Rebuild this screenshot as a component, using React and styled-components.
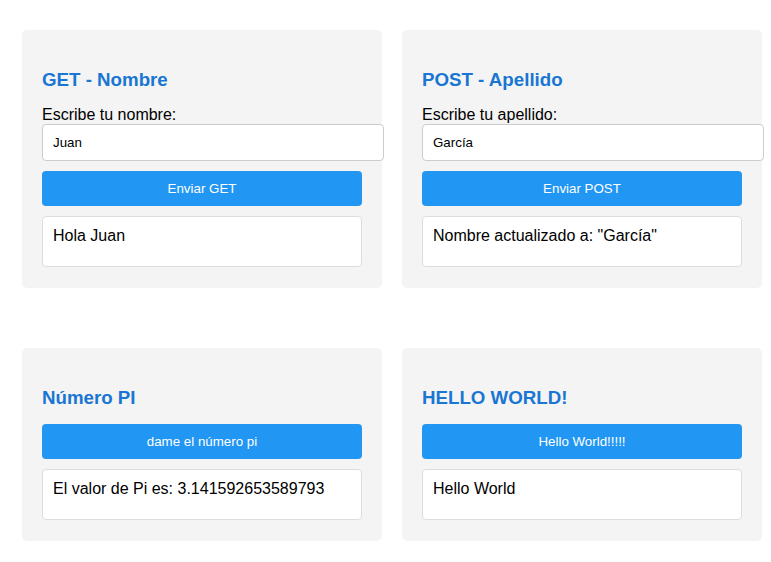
import React from 'react';
import styled, { createGlobalStyle } from 'styled-components';

const GlobalStyle = createGlobalStyle`
  body {
    margin: 0;
    background: #fff;
    font-family: "Liberation Sans", Arial, sans-serif;
  }
`;

const Page = styled.div`
  display: grid;
  grid-template-columns: repeat(2, 360px);
  column-gap: 20px;
  row-gap: 60px;
  align-items: start;
  padding: 30px 0 0 22px;
`;

const Card = styled.section`
  background: #f4f4f4;
  border-radius: 5px;
  padding: 20px 20px 21px;
`;

const Title = styled.h3`
  margin: 19px 0 15px;
  font-size: 18.72px;
  font-weight: bold;
  color: #1976d2;
`;

const Label = styled.label`
  display: block;
  font-size: 16px;
  color: #000;
`;

const Input = styled.input`
  display: block;
  width: 100%;
  padding: 10px;
  margin: 0;
  border: 1px solid #ccc;
  border-radius: 4px;
  font-family: "Liberation Sans", Arial, sans-serif;
  font-size: 13.33px;
  line-height: 15px;
  color: #000;
  background: #fff;
`;

const Button = styled.button`
  display: block;
  width: 100%;
  margin-top: ${p => (p.$spaced ? '10px' : '0')};
  padding: 10px;
  border: none;
  border-radius: 4px;
  background: #2196f3;
  color: #fff;
  font-family: "Liberation Sans", Arial, sans-serif;
  font-size: 13.33px;
  line-height: 15px;
  cursor: pointer;
`;

const Result = styled.div`
  box-sizing: border-box;
  margin-top: 10px;
  min-height: 51px;
  padding: 10px;
  border: 1px solid #ddd;
  border-radius: 4px;
  background: #fff;
  font-size: 16px;
  color: #000;
`;

const cards = [
  { title: 'GET - Nombre', label: 'Escribe tu nombre:', value: 'Juan', button: 'Enviar GET', result: 'Hola Juan' },
  { title: 'POST - Apellido', label: 'Escribe tu apellido:', value: 'García', button: 'Enviar POST', result: 'Nombre actualizado a: "García"' },
  { title: 'Número PI', button: 'dame el número pi', result: 'El valor de Pi es: 3.141592653589793' },
  { title: 'HELLO WORLD!', button: 'Hello World!!!!!', result: 'Hello World' },
];

const App = () => (
  <>
    <GlobalStyle />
    <Page>
      {cards.map(card => (
        <Card key={card.title}>
          <Title>{card.title}</Title>
          {card.label && (
            <>
              <Label>{card.label}</Label>
              <Input defaultValue={card.value} />
            </>
          )}
          <Button $spaced={!!card.label}>{card.button}</Button>
          <Result>{card.result}</Result>
        </Card>
      ))}
    </Page>
  </>
);

export default App;
